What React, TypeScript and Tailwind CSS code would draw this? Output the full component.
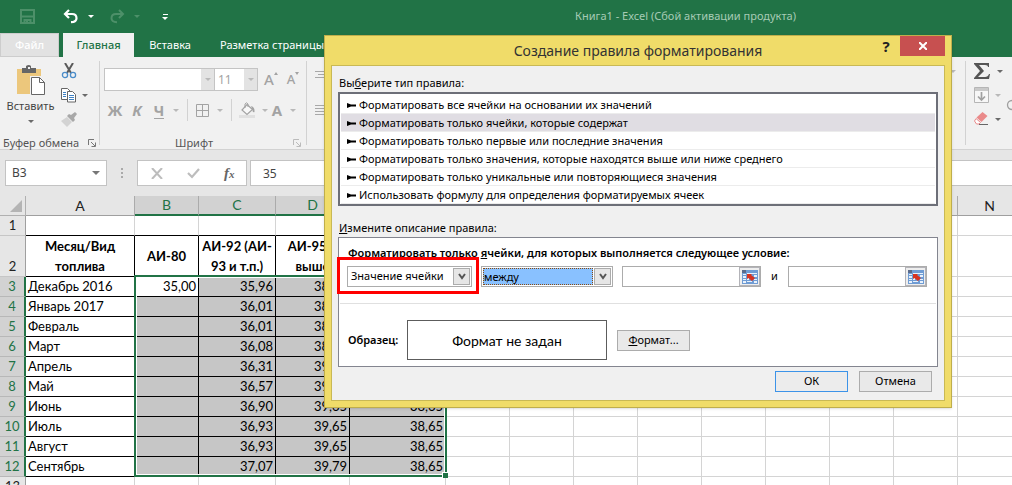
import type { ReactNode } from 'react';

const caret = 'block h-0 w-0 shrink-0 border-x-[3px] border-t-[3px] border-x-transparent';

function Caret({ tone = 'dark' }: { tone?: 'dark' | 'light' | 'white' | 'green' }) {
  const tones = {
    dark: 'border-t-[#6a6a6a]',
    light: 'border-t-[#b9b9b9]',
    white: 'border-t-white',
    green: 'border-t-[#4d9069]',
  };
  return <span className={`${caret} ${tones[tone]}`} />;
}

function TitleBar() {
  return (
    <header className="flex h-[33px] items-center bg-[#217346]">
      <div className="flex w-[400px] shrink-0 items-center pl-5">
        <button aria-label="Сохранить" className="mr-7 h-[15px] w-[15px]">
          <svg width="15" height="15" viewBox="0 0 15 15" fill="none" stroke="#4d9069" strokeWidth="2">
            <path d="M1 1h13v13H1z" />
            <path d="M2 7.500h11M4.500 14v-3h6v3M7 11v3" />
          </svg>
        </button>
        <button aria-label="Отменить" className="mr-[10px] h-4 w-[15px]">
          <svg width="15" height="15" viewBox="0 0 15 15" fill="none" stroke="#fff" strokeWidth="2.2">
            <path d="M6 1 2 5l4 4M2 5h7c3 0 4.500 2 4.500 4.200S12 13 8 13.200" />
          </svg>
        </button>
        <Caret tone="white" />
        <button aria-label="Вернуть" className="ml-4 mr-[9px] h-4 w-[15px]">
          <svg width="15" height="15" viewBox="0 0 15 15" fill="none" stroke="#4d9069" strokeWidth="2">
            <path d="M9 1l4 4-4 4M13 5H6C3 5 1.500 7 1.500 9.200S3 13 7 13.200" />
          </svg>
        </button>
        <Caret tone="green" />
        <button aria-label="Настройка панели" className="ml-[22px] flex w-[6px] flex-col items-center gap-[2px]">
          <span className="h-px w-[5px] bg-white" />
          <Caret tone="white" />
        </button>
      </div>
      <h1 className="mr-[216px] ml-auto whitespace-nowrap text-[11px] text-[#a6cbb5]">
        Книга1 - Excel (Сбой активации продукта)
      </h1>
    </header>
  );
}

function Tabs() {
  return (
    <nav className="flex h-6 bg-[#217346] text-[11px] whitespace-nowrap text-white">
      <a href="#file" className="mr-1 flex w-[59px] items-center justify-center border border-[#cdcdcd] bg-[#e2e2e2] font-medium">
        Файл
      </a>
      <a href="#home" className="flex w-[71px] items-center justify-center bg-[#f1f1f1] font-medium text-[#217346]">
        Главная
      </a>
      <a href="#insert" className="flex w-[72px] items-center justify-center">Вставка</a>
      <a href="#layout" className="flex items-center px-[14px]">Разметка страницы</a>
    </nav>
  );
}

function Launcher({ color }: { color: string }) {
  return (
    <svg className="shrink-0" width="8" height="8" viewBox="0 0 8 8" fill="none" stroke={color}>
      <path d="M0.500 6V.5H6M3 3l4 4M7.500 3.500v4h-4" />
    </svg>
  );
}

function ClipboardGroup() {
  return (
    <section className="flex w-[100px] shrink-0 flex-col border-r border-[#d2d2d2]">
      <div className="flex h-[70px] shrink-0">
        <button className="flex w-[61px] flex-col items-center text-[11px] leading-4 text-[#444]">
          <svg className="mt-1 mb-[2px] shrink-0" width="30" height="31" viewBox="0 0 30 31">
            <path d="M1 4h24v25H1z" fill="#ecc77c" />
            <path d="M6 3h4V1q3-2 5 0v2h5v5H6z" fill="#666" />
            <path d="M12 2h2v2h-2z" fill="#f1f1f1" />
            <path d="M14 11h12l4 5v15H14z" fill="#f1f1f1" />
            <path d="M15.500 12.500h8l5 5v12h-13z" fill="#fff" stroke="#666" />
            <path d="M23.500 12.500v5h5" fill="none" stroke="#666" />
          </svg>
          <span>Вставить</span>
          <span className="mt-[6px]"><Caret /></span>
        </button>
        <div className="flex flex-col gap-2 pt-[2px]">
          <button aria-label="Вырезать" className="h-4 w-4">
            <svg width="16" height="16" viewBox="0 0 16 16" fill="none">
              <path d="M4 0l6 10M12 0L6 10" stroke="#5a5a5a" strokeWidth="2" />
              <circle cx="4" cy="12" r="2.600" stroke="#4a8cc9" strokeWidth="1.300" />
              <circle cx="12" cy="12" r="2.600" stroke="#4a8cc9" strokeWidth="1.300" />
            </svg>
          </button>
          <button aria-label="Копировать" className="flex h-4 items-center gap-[5px]">
            <svg width="16" height="15" viewBox="0 0 16 15" fill="#fff" stroke="#666">
              <path d="M.5.5h6l3 3v8h-9z" />
              <path d="M2 4.500h3M2 6.500h3M2 8.500h3" stroke="#3f82c4" />
              <path d="M6.500 3.500h5l3 3v7.500h-8z" />
              <path d="M8 7.500h5M8 9.500h5M8 11.500h5" stroke="#3f82c4" />
            </svg>
            <Caret />
          </button>
          <button aria-label="Формат по образцу" className="h-4 w-4">
            <svg width="16" height="15" viewBox="0 0 16 15">
              <path d="M0 9l6-4 5 5-5 5z" fill="#d3d3d3" />
              <path d="M6 4l2-2 2 1 4-3 2 2-3 4 1 2-2 2z" fill="#a8a8a8" />
            </svg>
          </button>
        </div>
      </div>
      <div className="flex flex-1 items-center gap-2 pt-1 pl-[3px] text-[11px] leading-4 text-[#555]">
        <span className="w-[77px] whitespace-nowrap">Буфер обмена</span>
        <Launcher color="#777" />
      </div>
    </section>
  );
}

function FontGroup() {
  const glyph = 'flex h-5 w-[22px] items-center justify-center text-[15px] font-bold text-[#a3a3a3]';
  return (
    <section className="flex w-[207px] shrink-0 flex-col border-r border-[#d2d2d2]">
      <div className="mt-[7px] flex h-[23px] shrink-0 pl-1">
        <div className="flex w-[111px] border border-[#c4c4c4] bg-white">
          <input aria-label="Шрифт" className="min-w-0 flex-1" />
          <button aria-label="Список шрифтов" className="flex w-[13px] items-center justify-center bg-[#e3e3e3]"><Caret tone="light" /></button>
        </div>
        <div className="flex w-[43px] border-y border-r border-[#c4c4c4] bg-white">
          <input aria-label="Размер шрифта" defaultValue="11" className="min-w-0 flex-1 pl-[3px] text-[12px] text-[#a3a3a3]" />
          <button aria-label="Список размеров" className="flex w-[13px] items-center justify-center bg-[#e3e3e3]"><Caret tone="light" /></button>
        </div>
        <button aria-label="Увеличить размер" className="ml-[6px] flex items-center text-[15px] font-medium text-[#a3a3a3]">
          А<span className="mb-3 h-0 w-0 border-x-[2px] border-b-[3px] border-x-transparent border-b-[#a3a3a3]" />
        </button>
        <button aria-label="Уменьшить размер" className="ml-[9px] flex items-center text-[13px] font-medium text-[#a3a3a3]">
          А<span className="mb-3 h-0 w-0 border-x-[2px] border-t-[3px] border-x-transparent border-t-[#a3a3a3]" />
        </button>
      </div>
      <div className="mt-[8px] flex h-[22px] shrink-0 items-center pl-1">
        <button className={glyph}>Ж</button>
        <button className={`${glyph} italic`}>К</button>
        <button className={glyph}><span className="border-b border-[#a3a3a3] leading-4">Ч</span></button>
        <span className="ml-[3px]"><Caret tone="light" /></span>
        <span className="ml-2 h-[22px] w-px bg-[#d2d2d2]" />
        <button aria-label="Границы" className="mr-2 ml-2">
          <svg width="13" height="13" viewBox="0 0 13 13" fill="none" stroke="#a3a3a3">
            <path d="M.5.5h12v12H.5zM6.500 0v13M0 6.500h13" />
          </svg>
        </button>
        <Caret tone="light" />
        <span className="ml-2 h-[22px] w-px bg-[#d2d2d2]" />
        <button aria-label="Цвет заливки" className="mr-[6px] ml-[7px]">
          <svg width="17" height="17" viewBox="0 0 17 17" fill="none">
            <path d="M0 13h16v3H0z" fill="#e0e0e0" />
            <path d="M8 2.500l5.500 5L8 12.500 3 8z" stroke="#a3a3a3" strokeWidth="1.200" fill="#f8f8f8" />
            <path d="M6 6V2q1.500-2.500 3 0v3" stroke="#a3a3a3" />
            <path d="M12 4q4 1 3.500 6-2 1-2-2z" fill="#a3a3a3" />
          </svg>
        </button>
        <Caret tone="light" />
        <button className="flex h-5 w-[18px] items-center justify-center text-[15px] font-bold text-[#a3a3a3]">А</button>
        <span className="ml-1"><Caret tone="light" /></span>
      </div>
      <div className="flex flex-1 items-center pt-[14px] pl-[75px] text-[11px] leading-4 text-[#555]">
        <span className="flex-1">Шрифт</span>
        <span className="mr-[5px]"><Launcher color="#bbb" /></span>
      </div>
    </section>
  );
}

function Ribbon() {
  return (
    <div className="flex h-[93px] border-b border-[#d2d2d2] bg-[#f1f1f1] pt-1 pb-1">
      <ClipboardGroup />
      <FontGroup />
      <div className="flex flex-1 flex-col pt-[10px] pl-2">
        <svg width="17" height="46" viewBox="0 0 17 46" stroke="#a8a8a8">
          <path d="M0 .5h17M3 3.500h14M0 6.500h17M0 34.500h17M0 37.500h17M0 40.500h17M0 43.500h17" />
        </svg>
      </div>
      <div className="flex w-[15px] justify-start pt-[9px]"><Caret tone="light" /></div>
      <section className="flex w-[47px] shrink-0 overflow-hidden border-l border-[#d2d2d2] pl-2">
        <div className="flex w-8 shrink-0 flex-col gap-2 pt-[2px]">
          <button aria-label="Сумма" className="flex h-4 items-center gap-[7px]">
            <svg width="16" height="16" viewBox="0 0 16 16">
              <path d="M0 0h15v4h-1q0-2-3-2H5l5 6-6 6h7q3 0 4-3h1l-1 5H0v-1l6-7-6-7z" fill="#555" />
            </svg>
            <Caret />
          </button>
          <button aria-label="Заполнить" className="flex h-4 items-center gap-[6px]">
            <svg width="15" height="16" viewBox="0 0 15 16" fill="none" stroke="#b5b5b5">
              <path d="M.5.5h14v15H.5z" fill="#f7f7f7" />
              <path d="M1 1h13v3H1z" fill="#c9c9c9" stroke="none" />
              <path d="M7.500 5v8M4 9.500l3.500 3.500L11 9.500" stroke="#a0a0a0" strokeWidth="1.700" />
            </svg>
            <Caret tone="light" />
          </button>
          <button aria-label="Очистить" className="flex h-4 items-center gap-[6px]">
            <svg width="15" height="14" viewBox="0 0 15 14">
              <path d="M8.500 0l5 4-6 6-5-4.500z" fill="#ea8a8a" />
              <path d="M2 6.500l4.500 4L5 12H2.500L.5 9z" fill="#fff" stroke="#ea8a8a" />
              <path d="M5 12.500h9" stroke="#666" />
            </svg>
            <Caret />
          </button>
        </div>
        <svg className="mt-[37px] shrink-0" width="14" height="16" viewBox="0 0 14 16" fill="none" stroke="#a0a0a0" strokeWidth="1.300">
          <circle cx="6" cy="7" r="4.500" />
        </svg>
      </section>
    </div>
  );
}

function FormulaBar() {
  return (
    <div className="flex h-[46px] items-start bg-[#e6e6e6] pt-[10px] pl-[5px] text-[12px] text-[#444]">
      <div className="flex h-[26px] w-[102px] items-center border border-[#c3c3c3] bg-white pr-[6px]">
        <input aria-label="Имя ячейки" defaultValue="B3" className="min-w-0 flex-1 pl-[6px]" />
        <span className="h-0 w-0 border-x-4 border-t-4 border-x-transparent border-t-[#777]" />
      </div>
      <div className="mt-2 flex w-[30px] flex-col items-center gap-[2px]">
        <span className="h-[2px] w-[2px] bg-[#aaa]" />
        <span className="h-[2px] w-[2px] bg-[#aaa]" />
        <span className="h-[2px] w-[2px] bg-[#aaa]" />
      </div>
      <div className="flex h-[26px] w-[110px] items-center border border-[#c3c3c3] bg-white pl-[13px]">
        <button aria-label="Отмена ввода" className="mr-6">
          <svg width="12" height="11" viewBox="0 0 12 11" stroke="#bdbdbd" strokeWidth="2"><path d="M1 0l10 11M11 0L1 11" /></svg>
        </button>
        <button aria-label="Ввод" className="mr-6">
          <svg width="13" height="11" viewBox="0 0 13 11" fill="none" stroke="#bdbdbd" strokeWidth="2.200"><path d="M1 5l4 4 7-8" /></svg>
        </button>
        <button aria-label="Вставить функцию" className="font-['Liberation_Serif',serif] text-[15px] leading-4 font-bold italic text-[#666]">
          f<span className="text-[11px]">x</span>
        </button>
      </div>
      <input aria-label="Строка формул" defaultValue="35" className="ml-[3px] h-[26px] min-w-0 flex-1 border-y border-l border-[#c3c3c3] bg-white pl-3" />
    </div>
  );
}

const columns = ['A', 'B', 'C', 'D', 'E', 'F', 'G', 'H', 'I', 'J', 'K', 'L', 'M', 'N'];
const plain = columns.slice(5);
const fuel: [string, string, string, string, string][] = [
  ['Декабрь 2016', '35,00', '35,96', '38,65', '38,65'],
  ['Январь 2017', '', '36,01', '38,65', '38,65'],
  ['Февраль', '', '36,01', '38,65', '38,65'],
  ['Март', '', '36,08', '38,65', '38,65'],
  ['Апрель', '', '36,31', '39,65', '38,65'],
  ['Май', '', '36,57', '39,65', '38,65'],
  ['Июнь', '', '36,90', '39,65', '38,65'],
  ['Июль', '', '36,93', '39,65', '38,65'],
  ['Август', '', '36,93', '39,65', '38,65'],
  ['Сентябрь', '', '37,07', '39,79', '38,65'],
];

function Blank({ from = plain }: { from?: string[] }) {
  return (
    <>
      {from.map((c) => (
        <td key={c} className="border-r border-b border-[#d4d4d4]" />
      ))}
      <td className="border-b border-[#d4d4d4]" />
    </>
  );
}

function RowHead({ n, selected = false }: { n: number; selected?: boolean }) {
  return (
    <th
      scope="row"
      className={
        selected
          ? 'border-r-2 border-b border-r-[#217346] border-b-[#b8b8b8] bg-[#d2d2d2] text-center align-bottom font-normal text-[#217346]'
          : 'border-r border-b border-r-[#9f9f9f] border-b-[#c6c6c6] bg-[#e6e6e6] text-center align-bottom font-normal text-[#222]'
      }
    >
      {n}
    </th>
  );
}

function Sheet() {
  const head = 'border-r border-b border-black px-0 text-center leading-5 font-bold whitespace-nowrap';
  return (
    <div className="relative overflow-hidden bg-white font-['Lato','Noto_Sans',sans-serif]">
      <table className="w-full table-fixed border-separate border-spacing-0 text-[13px] leading-[19px] text-black">
        <colgroup>
          <col className="w-[26px]" />
          <col className="w-[109px]" />
          <col className="w-[64px]" />
          <col className="w-[77px]" />
          <col className="w-[74px]" />
          <col className="w-[96px]" />
          {plain.map((c) => (
            <col key={c} className="w-[64px]" />
          ))}
          <col />
        </colgroup>
        <thead>
          <tr className="h-5">
            <td className="border-r border-b border-[#b0b0b0] bg-[#e6e6e6] p-0">
              <span className="ml-[10px] block h-0 w-0 border-b-[12px] border-l-[12px] border-b-[#b4b4b4] border-l-transparent" />
            </td>
            {columns.map((c, i) => (
              <th
                key={c}
                scope="col"
                className={
                  i > 0 && i < 5
                    ? 'border-r border-b-2 border-r-[#ababab] border-b-[#217346] bg-[#d2d2d2] text-[14px] leading-[18px] font-normal text-[#217346]'
                    : 'border-r border-b border-r-[#ababab] border-b-[#9f9f9f] bg-[#e6e6e6] text-[14px] font-normal text-[#222]'
                }
              >
                {c}
              </th>
            ))}
            <td className="border-b border-[#9f9f9f] bg-[#e6e6e6]" />
          </tr>
        </thead>
        <tbody>
          <tr className="h-5">
            <RowHead n={1} />
            {columns.slice(0, 5).map((c) => (
              <td key={c} className="border-r border-b border-r-[#d4d4d4] border-b-black" />
            ))}
            <Blank />
          </tr>
          <tr className="h-10">
            <RowHead n={2} />
            <td className={head}>Месяц/Вид<br />топлива</td>
            <td className={head}>АИ-80</td>
            <td className={head}>АИ-92 (АИ-<br />93 и т.п.)</td>
            <td className={head}>АИ-95 и<br />выше</td>
            <td className={head}>ДТ</td>
            <Blank />
          </tr>
          {fuel.map((row, r) => (
            <tr key={row[0]} className="h-5">
              <RowHead n={r + 3} selected />
              {row.map((v, c) => (
                <td
                  key={c}
                  className={
                    c === 0
                      ? 'border-r border-b border-black pl-[2px] whitespace-nowrap'
                      : r === 0 && c === 1
                        ? 'border-r border-b border-black pr-[2px] text-right'
                        : 'border-r border-b border-black bg-[#c6c6c6] pr-[2px] text-right'
                  }
                >
                  {v}
                </td>
              ))}
              <Blank />
            </tr>
          ))}
          <tr className="h-5">
            <RowHead n={13} />
            <Blank from={columns} />
          </tr>
        </tbody>
      </table>
      <div className="pointer-events-none absolute top-[79px] left-[134px] h-[202px] w-[313px] border-2 border-[#217346] shadow-[inset_0_0_0_1px_#fff]">
        <span className="absolute -right-[3px] -bottom-[3px] h-[6px] w-[6px] border-t border-l border-white bg-[#217346]" />
      </div>
    </div>
  );
}

const rules = [
  'Форматировать все ячейки на основании их значений',
  'Форматировать только ячейки, которые содержат',
  'Форматировать только первые или последние значения',
  'Форматировать только значения, которые находятся выше или ниже среднего',
  'Форматировать только уникальные или повторяющиеся значения',
  'Использовать формулу для определения форматируемых ячеек',
];

function PushButton({ children, primary = false }: { children: ReactNode; primary?: boolean }) {
  return (
    <button
      className={
        primary
          ? 'h-[21px] w-[73px] border border-[#3c93e8] bg-[#ececec]'
          : 'h-[21px] w-[73px] border border-[#acacac] bg-[#e9e9e9]'
      }
    >
      {children}
    </button>
  );
}

function DropButton() {
  return (
    <span className="pointer-events-none flex w-[17px] shrink-0 items-center justify-center border border-[#acacac] bg-[#e6e6e6]">
      <svg width="8" height="7" viewBox="0 0 8 7" fill="none" stroke="#555" strokeWidth="2"><path d="M1 1l3 4 3-4" /></svg>
    </span>
  );
}

function RangeInput({ label }: { label: string }) {
  return (
    <div className="flex h-[21px] w-[139px] border border-[#acacac] bg-white">
      <input aria-label={label} className="min-w-0 flex-1" />
      <button aria-label="Выбрать диапазон" className="flex w-[21px] items-center justify-center border border-[#b3b3b8] bg-[#eee]">
        <svg width="16" height="14" viewBox="0 0 16 14">
          <path d="M0 0h16v14H0z" fill="#6f9cd4" />
          <path d="M0 0h4v3H0z" fill="#5a6b8c" />
          <path d="M1 4h3v1H1zM1 6h3v2H1zM1 9h3v1H1zM1 11h3v2H1zM5 3h10v1H5zM12 5h3v2h-3zM12 9h3v1h-3zM5 11h5v1H5zM12 11h3v2h-3zM5 6h2v4H5z" fill="#e8f1fb" />
          <path d="M5 4h5L9 5l4 3-3 3-3.500-3L5 9z" fill="#d8321f" />
        </svg>
      </button>
    </div>
  );
}

function RuleDialog() {
  return (
    <div
      role="dialog"
      aria-labelledby="dialog-title"
      className="absolute top-[35px] left-[324px] w-[628px] border border-[#bfae4c] bg-[#f0dc69] px-[6px] pb-[6px] text-[11px] text-black shadow-sm"
    >
      <div className="relative flex h-[29px] items-center justify-center">
        <h2 id="dialog-title" className="text-[14px] text-[#333]">Создание правила форматирования</h2>
        <div className="absolute top-0 right-0 flex h-5 items-center">
          <button aria-label="Справка" className="w-7 text-[15px] font-bold text-[#222]">?</button>
          <button aria-label="Закрыть" className="flex h-5 w-[45px] items-center justify-center bg-[#c75050]">
            <svg width="8" height="8" viewBox="0 0 8 8" stroke="#fff" strokeWidth="2"><path d="M0 0l8 8M8 0L0 8" /></svg>
          </button>
        </div>
      </div>
      <div className="border border-[#c9b955] bg-[#f0f0f0] px-[6px] pt-[9px] pb-2">
        <p className="h-[17px] pl-px leading-4">Вы<u>б</u>ерите тип правила:</p>
        <ul className="border-2 border-[#6d6f78] bg-white px-px pt-[2px]">
          {rules.map((rule, i) => (
            <li
              key={rule}
              className={
                i === 1
                  ? 'flex h-[18px] items-center border-b border-[#ececec] bg-[#e0dde3] pt-px pl-[6px]'
                  : 'flex h-[18px] items-center border-b border-[#ececec] pt-px pl-[6px]'
              }
            >
              <svg className="mr-[3px]" width="9" height="5" viewBox="0 0 9 5"><path d="M0 0l4 1.500h5v2H4L0 5z" fill="#000" /></svg>
              <span className="whitespace-nowrap">{rule}</span>
            </li>
          ))}
        </ul>
        <p className="mt-[14px] mb-px h-4 pl-px leading-4"><u>И</u>змените описание правила:</p>
        <div className="relative border border-[#83858f] bg-white">
          <p className="pt-[7px] pl-[9px] leading-4 font-semibold">
            Форматировать только <u>я</u>чейки, для которых выполняется следующее условие:
          </p>
          <div className="mt-[5px] flex items-center pl-2">
            <div className="mr-[9px] flex h-[21px] w-[125px] border border-[#acacac] p-px">
              <select aria-label="Что проверять" className="min-w-0 flex-1 appearance-none pl-[2px]">
                <option>Значение ячейки</option>
              </select>
              <DropButton />
            </div>
            <div className="mr-[9px] flex h-[21px] w-[132px] border border-[#acacac] p-px">
              <select aria-label="Условие" className="mr-px min-w-0 flex-1 appearance-none border border-dotted border-[#8a4b10] bg-[#89c1ff] leading-[14px]">
                <option>между</option>
              </select>
              <DropButton />
            </div>
            <RangeInput label="Минимум" />
            <span className="w-[27px] text-center">и</span>
            <RangeInput label="Максимум" />
          </div>
          <hr className="mx-px mt-4 border-[#e0e0e0]" />
          <div className="flex items-center pt-4 pb-[6px] pl-[9px]">
            <span className="w-[59px] font-semibold">Образец:</span>
            <output className="flex h-10 w-[200px] items-center justify-center border border-[#5c5c5c] font-['Lato','Noto_Sans',sans-serif] text-[14px]">
              Формат не задан
            </output>
            <span className="ml-[10px]"><PushButton><u>Ф</u>ормат...</PushButton></span>
          </div>
          <div className="pointer-events-none absolute top-[19px] -left-[2px] h-[37px] w-[142px] border-3 border-[#f00]" />
        </div>
        <div className="mt-1 flex justify-end gap-[11px] pr-[6px]">
          <PushButton primary>ОК</PushButton>
          <PushButton>Отмена</PushButton>
        </div>
      </div>
    </div>
  );
}

export default function App() {
  return (
    <div className="relative h-screen min-h-[480px] overflow-hidden bg-white font-['Noto_Sans',sans-serif]">
      <TitleBar />
      <Tabs />
      <Ribbon />
      <FormulaBar />
      <Sheet />
      <RuleDialog />
    </div>
  );
}
